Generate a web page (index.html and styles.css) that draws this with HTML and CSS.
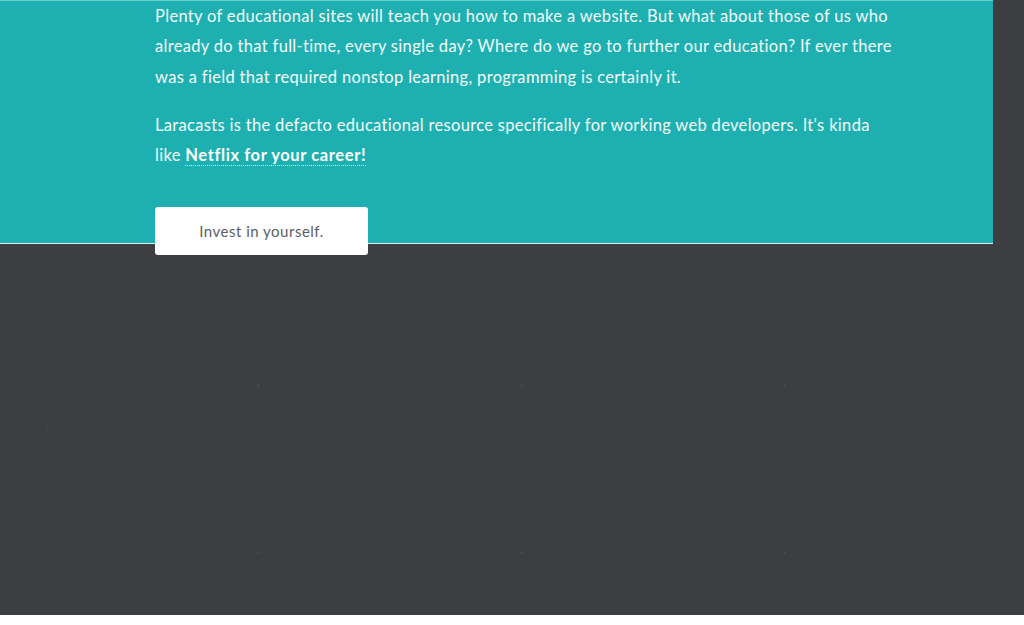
FILE: index.html
```html
<!DOCTYPE html>
<html lang="en">
<head>
<meta charset="utf-8">
<title>Laracasts</title>
<link rel="stylesheet" href="styles.css">
</head>
<body>
<div class="page">
  <section class="hero">
    <div class="hero-inner">
      <p class="copy">Plenty of educational sites will teach you how to make a website. But what about those of us who already do that full-time, every single day? Where do we go to further our education? If ever there was a field that required nonstop learning, programming is certainly it.</p>
      <p class="copy">Laracasts is the defacto educational resource specifically for working web developers. It's kinda like <a class="strong-link" href="#">Netflix for your career!</a></p>
      <a class="cta" href="#">Invest in yourself.</a>
    </div>
  </section>
  <div class="dark-area"></div>
</div>
<div class="footer-gap"></div>
</body>
</html>
```

FILE: styles.css
```css
html, body {
  margin: 0;
  padding: 0;
}
body {
  background: #ffffff;
  font-family: Lato, "Open Sans", sans-serif;
  font-variant-ligatures: none;
}
.page {
  background-color: #3d3e42;
  background-image:
    radial-gradient(circle, rgba(255, 255, 255, 0.09) 0.7px, transparent 1.2px),
    radial-gradient(circle, rgba(255, 255, 255, 0.07) 0.7px, transparent 1.2px);
  background-size: 263px 167px, 331px 211px;
  background-position: 127px 135px, 213px 113px;
  height: 615px;
  display: flex;
  flex-direction: column;
}
.hero {
  width: 993px;
  background: #1eb0b1;
  border-top: 1px solid #6cd0cf;
  border-bottom: 1px solid #d9f3f2;
  box-sizing: border-box;
  height: 244px;
}
.hero-inner {
  padding-left: 155px;
  width: 738px;
}
.copy {
  margin: 0 0 17.6px 0;
  color: #f4fbfb;
  font-size: 16.5px;
  line-height: 30.4px;
  letter-spacing: 0.32px;
}
.strong-link {
  color: #ffffff;
  font-weight: 700;
  letter-spacing: 0.6px;
  text-decoration: none;
  border-bottom: 1px dotted #e6f7f7;
}
.cta {
  display: flex;
  align-items: center;
  justify-content: center;
  width: 213px;
  height: 48px;
  margin-top: 36.4px;
  background: #ffffff;
  border-radius: 3px;
  color: #5b5e66;
  font-size: 15px;
  letter-spacing: 0.5px;
  text-decoration: none;
  position: relative;
}
.dark-area {
  flex: 1;
}
.footer-gap {
  height: 10px;
  background: #ffffff;
}
```
